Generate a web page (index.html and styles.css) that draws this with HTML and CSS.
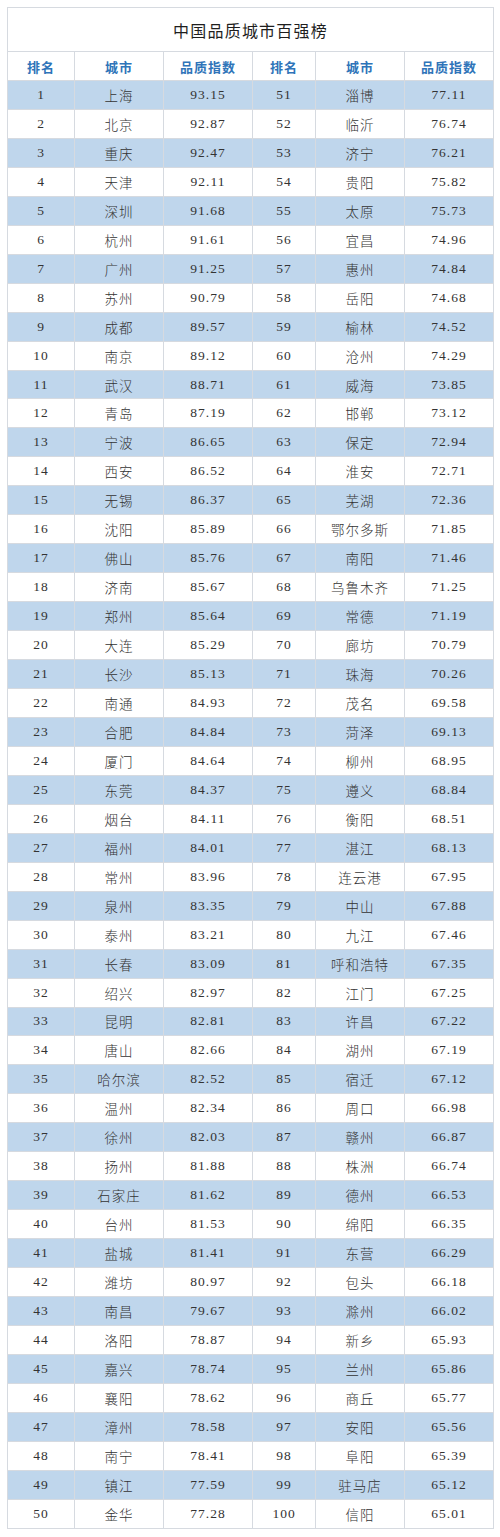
FILE: index.html
```html
<!DOCTYPE html>
<html lang="zh">
<head>
<meta charset="utf-8">
<title>中国品质城市百强榜</title>
<link rel="stylesheet" href="styles.css">
</head>
<body>
<table class="rank">
<colgroup>
<col class="c-rank"><col class="c-city"><col class="c-score">
<col class="c-rank2"><col class="c-city"><col class="c-score">
</colgroup>
<thead>
<tr class="title-row"><th colspan="6" class="title">中国品质城市百强榜</th></tr>
<tr class="head-row"><th>排名</th><th>城市</th><th>品质指数</th><th>排名</th><th>城市</th><th>品质指数</th></tr>
</thead>
<tbody>
<tr><td>1</td><td>上海</td><td>93.15</td><td>51</td><td>淄博</td><td>77.11</td></tr>
<tr><td>2</td><td>北京</td><td>92.87</td><td>52</td><td>临沂</td><td>76.74</td></tr>
<tr><td>3</td><td>重庆</td><td>92.47</td><td>53</td><td>济宁</td><td>76.21</td></tr>
<tr><td>4</td><td>天津</td><td>92.11</td><td>54</td><td>贵阳</td><td>75.82</td></tr>
<tr><td>5</td><td>深圳</td><td>91.68</td><td>55</td><td>太原</td><td>75.73</td></tr>
<tr><td>6</td><td>杭州</td><td>91.61</td><td>56</td><td>宜昌</td><td>74.96</td></tr>
<tr><td>7</td><td>广州</td><td>91.25</td><td>57</td><td>惠州</td><td>74.84</td></tr>
<tr><td>8</td><td>苏州</td><td>90.79</td><td>58</td><td>岳阳</td><td>74.68</td></tr>
<tr><td>9</td><td>成都</td><td>89.57</td><td>59</td><td>榆林</td><td>74.52</td></tr>
<tr><td>10</td><td>南京</td><td>89.12</td><td>60</td><td>沧州</td><td>74.29</td></tr>
<tr><td>11</td><td>武汉</td><td>88.71</td><td>61</td><td>威海</td><td>73.85</td></tr>
<tr><td>12</td><td>青岛</td><td>87.19</td><td>62</td><td>邯郸</td><td>73.12</td></tr>
<tr><td>13</td><td>宁波</td><td>86.65</td><td>63</td><td>保定</td><td>72.94</td></tr>
<tr><td>14</td><td>西安</td><td>86.52</td><td>64</td><td>淮安</td><td>72.71</td></tr>
<tr><td>15</td><td>无锡</td><td>86.37</td><td>65</td><td>芜湖</td><td>72.36</td></tr>
<tr><td>16</td><td>沈阳</td><td>85.89</td><td>66</td><td>鄂尔多斯</td><td>71.85</td></tr>
<tr><td>17</td><td>佛山</td><td>85.76</td><td>67</td><td>南阳</td><td>71.46</td></tr>
<tr><td>18</td><td>济南</td><td>85.67</td><td>68</td><td>乌鲁木齐</td><td>71.25</td></tr>
<tr><td>19</td><td>郑州</td><td>85.64</td><td>69</td><td>常德</td><td>71.19</td></tr>
<tr><td>20</td><td>大连</td><td>85.29</td><td>70</td><td>廊坊</td><td>70.79</td></tr>
<tr><td>21</td><td>长沙</td><td>85.13</td><td>71</td><td>珠海</td><td>70.26</td></tr>
<tr><td>22</td><td>南通</td><td>84.93</td><td>72</td><td>茂名</td><td>69.58</td></tr>
<tr><td>23</td><td>合肥</td><td>84.84</td><td>73</td><td>菏泽</td><td>69.13</td></tr>
<tr><td>24</td><td>厦门</td><td>84.64</td><td>74</td><td>柳州</td><td>68.95</td></tr>
<tr><td>25</td><td>东莞</td><td>84.37</td><td>75</td><td>遵义</td><td>68.84</td></tr>
<tr><td>26</td><td>烟台</td><td>84.11</td><td>76</td><td>衡阳</td><td>68.51</td></tr>
<tr><td>27</td><td>福州</td><td>84.01</td><td>77</td><td>湛江</td><td>68.13</td></tr>
<tr><td>28</td><td>常州</td><td>83.96</td><td>78</td><td>连云港</td><td>67.95</td></tr>
<tr><td>29</td><td>泉州</td><td>83.35</td><td>79</td><td>中山</td><td>67.88</td></tr>
<tr><td>30</td><td>泰州</td><td>83.21</td><td>80</td><td>九江</td><td>67.46</td></tr>
<tr><td>31</td><td>长春</td><td>83.09</td><td>81</td><td>呼和浩特</td><td>67.35</td></tr>
<tr><td>32</td><td>绍兴</td><td>82.97</td><td>82</td><td>江门</td><td>67.25</td></tr>
<tr><td>33</td><td>昆明</td><td>82.81</td><td>83</td><td>许昌</td><td>67.22</td></tr>
<tr><td>34</td><td>唐山</td><td>82.66</td><td>84</td><td>湖州</td><td>67.19</td></tr>
<tr><td>35</td><td>哈尔滨</td><td>82.52</td><td>85</td><td>宿迁</td><td>67.12</td></tr>
<tr><td>36</td><td>温州</td><td>82.34</td><td>86</td><td>周口</td><td>66.98</td></tr>
<tr><td>37</td><td>徐州</td><td>82.03</td><td>87</td><td>赣州</td><td>66.87</td></tr>
<tr><td>38</td><td>扬州</td><td>81.88</td><td>88</td><td>株洲</td><td>66.74</td></tr>
<tr><td>39</td><td>石家庄</td><td>81.62</td><td>89</td><td>德州</td><td>66.53</td></tr>
<tr><td>40</td><td>台州</td><td>81.53</td><td>90</td><td>绵阳</td><td>66.35</td></tr>
<tr><td>41</td><td>盐城</td><td>81.41</td><td>91</td><td>东营</td><td>66.29</td></tr>
<tr><td>42</td><td>潍坊</td><td>80.97</td><td>92</td><td>包头</td><td>66.18</td></tr>
<tr><td>43</td><td>南昌</td><td>79.67</td><td>93</td><td>滁州</td><td>66.02</td></tr>
<tr><td>44</td><td>洛阳</td><td>78.87</td><td>94</td><td>新乡</td><td>65.93</td></tr>
<tr><td>45</td><td>嘉兴</td><td>78.74</td><td>95</td><td>兰州</td><td>65.86</td></tr>
<tr><td>46</td><td>襄阳</td><td>78.62</td><td>96</td><td>商丘</td><td>65.77</td></tr>
<tr><td>47</td><td>漳州</td><td>78.58</td><td>97</td><td>安阳</td><td>65.56</td></tr>
<tr><td>48</td><td>南宁</td><td>78.41</td><td>98</td><td>阜阳</td><td>65.39</td></tr>
<tr><td>49</td><td>镇江</td><td>77.59</td><td>99</td><td>驻马店</td><td>65.12</td></tr>
<tr><td>50</td><td>金华</td><td>77.28</td><td>100</td><td>信阳</td><td>65.01</td></tr>
</tbody>
</table>
</body>
</html>
```

FILE: styles.css
```css
html, body {
  margin: 0;
  padding: 0;
  background: #ffffff;
}
body {
  padding: 7px 0 0 7px;
  font-family: "Liberation Serif", "Noto Sans CJK SC", serif;
  color: #333333;
}
.rank {
  border-collapse: collapse;
  table-layout: fixed;
  width: 486px;
}
.c-rank { width: 67px; }
.c-city { width: 89px; }
.c-score { width: 89px; }
.c-rank2 { width: 63px; }
.rank th, .rank td {
  border: 1px solid #d6dae0;
  text-align: center;
  padding: 0;
  white-space: nowrap;
  overflow: hidden;
}
.title-row th {
  height: 43px;
  font-size: 16px;
  font-weight: normal;
  letter-spacing: 1.2px;
  color: #1e1e1e;
  font-family: "Noto Sans CJK SC", sans-serif;
}
.head-row th {
  height: 28px;
  font-size: 13px;
  font-weight: bold;
  letter-spacing: 1px;
  color: #2f74b9;
  font-family: "Noto Sans CJK SC", sans-serif;
}
.rank td {
  height: 27.96px;
  font-size: 13.5px;
  font-weight: 300;
  letter-spacing: 1px;
  color: #333333;
}
.rank tbody tr:nth-child(odd) td {
  background: #bfd6ec;
}
```
